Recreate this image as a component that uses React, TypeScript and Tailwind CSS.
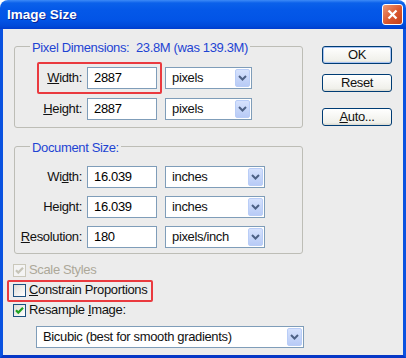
import React from "react";

function Chevron() {
  return (
    <svg width="9" height="6" viewBox="0 0 9 6">
      <path d="M1 1 L4.5 4.5 L8 1" fill="none" stroke="#4d6185" strokeWidth="2" />
    </svg>
  );
}

function Select({ label, w }: { label: string; w: string }) {
  return (
    <div className={`flex h-[22px] items-center border border-[#7f9db9] bg-white ${w}`}>
      <span className="flex-1 truncate whitespace-nowrap pl-[6px]">{label}</span>
      <div className="mr-[1px] flex h-[18px] w-[15px] items-center justify-center rounded-[2px] border border-[#b9cdf7] bg-[linear-gradient(to_bottom,#d6e2fd,#b8cbf6)]">
        <Chevron />
      </div>
    </div>
  );
}

function Input({ value }: { value: string }) {
  return (
    <div className="flex h-[22px] w-[70px] items-center border border-[#7f9db9] bg-white pl-[6px] text-black">
      {value}
    </div>
  );
}

function Check({ state }: { state: "disabled" | "off" | "on" }) {
  const box =
    state === "disabled"
      ? "border-[#cac8bb] bg-[#f4f4f4]"
      : "border-[#1c5180] bg-[linear-gradient(135deg,#dcdcd7,#ffffff)]";
  return (
    <div className={`flex h-[13px] w-[13px] shrink-0 items-center justify-center border ${box}`}>
      {state !== "off" && (
        <svg width="11" height="11" viewBox="0 0 11 11">
          <path
            d="M2 5.2 L4.3 7.6 L9 2.8"
            fill="none"
            stroke={state === "on" ? "#21a121" : "#c6c4b8"}
            strokeWidth="2.2"
          />
        </svg>
      )}
    </div>
  );
}

function Btn({ children, def, className }: { children: React.ReactNode; def?: boolean; className?: string }) {
  return (
    <div
      className={`flex h-[18px] w-[70px] items-center justify-center rounded-[3px] border border-[#003c74] bg-[linear-gradient(to_bottom,#ffffff,#f0f0ea_85%,#d8d8d0)] ${
        def ? "shadow-[inset_0_0_0_1px_#a9c4f3]" : ""
      } ${className ?? ""}`}
    >
      {children}
    </div>
  );
}

export default function App() {
  return (
    <div className="flex h-[358px] w-[406px] flex-col overflow-hidden rounded-t-[8px] font-['Liberation_Sans',Arial,sans-serif] text-[13px] leading-[16px] tracking-[-0.35px] text-[#111]">
      {/* title bar */}
      <div className="flex h-[29px] shrink-0 items-center justify-between bg-[linear-gradient(to_bottom,#3d8af7_0px,#0b61ea_3px,#0458e8_10px,#0254e6_20px,#004ad9_26px,#003cce_29px)] pl-[7px] pr-[3px]">
        <span className="pt-[1px] text-[13.5px] font-bold tracking-normal text-white [text-shadow:1px_1px_0_#0a2596]">Image Size</span>
        <div className="flex h-[21px] w-[21px] items-center justify-center rounded-[3px] border border-white bg-[linear-gradient(135deg,#ec9a78,#d9562e_55%,#c4401b)]">
          <svg width="11" height="11" viewBox="0 0 11 11">
            <path d="M1.5 1.5 L9.5 9.5 M9.5 1.5 L1.5 9.5" stroke="white" strokeWidth="2.3" />
          </svg>
        </div>
      </div>

      {/* frame + client */}
      <div className="flex flex-1 border-x-[3px] border-b-[3px] border-x-[#0a52e0] border-b-[#0637c6]">
        <div className="flex flex-1 bg-[#ececec] pl-[11px] pt-[17px]">
          {/* left column */}
          <div className="flex w-[290px] flex-col">
            {/* Pixel Dimensions */}
            <div className="relative w-[289px] rounded-[3px] border border-[#bdbdb6] pb-[7px] pt-[15px]">
              <span className="absolute -top-[7px] left-[15px] whitespace-pre bg-[#ececec] px-[2px] text-[#1e44d3]">
                Pixel Dimensions:  23.8M (was 139.3M)
              </span>
              <div className="flex items-center">
                <div className="ml-[22px] flex items-center rounded-[2px] border-2 border-[#ea3a3f] py-[3px] pr-[3px]">
                  <div className="flex w-[43px] justify-end whitespace-nowrap">
                    <span>
                      <u>W</u>idth:
                    </span>
                  </div>
                  <div className="ml-[5px]">
                    <Input value="2887" />
                  </div>
                </div>
                <div className="ml-[3px]">
                  <Select label="pixels" w="w-[87px]" />
                </div>
              </div>
              <div className="mt-[4px] flex items-center">
                <div className="ml-[22px] flex items-center border-x-2 border-transparent pr-[3px]">
                  <div className="flex w-[43px] justify-end whitespace-nowrap">
                    <span>
                      <u>H</u>eight:
                    </span>
                  </div>
                  <div className="ml-[5px]">
                    <Input value="2887" />
                  </div>
                </div>
                <div className="ml-[3px]">
                  <Select label="pixels" w="w-[87px]" />
                </div>
              </div>
            </div>

            {/* Document Size */}
            <div className="relative mt-[18px] w-[289px] rounded-[3px] border border-[#bdbdb6] pb-[5px] pt-[19px]">
              <span className="absolute -top-[7px] left-[15px] whitespace-pre bg-[#ececec] px-[2px] text-[#1e44d3]">
                Document Size:
              </span>
              <div className="flex flex-col gap-[8px]">
                {[
                  { l: <>Wi<u>d</u>th:</>, v: "16.039", s: "inches" },
                  { l: <>Hei<u>g</u>ht:</>, v: "16.039", s: "inches" },
                  { l: <><u>R</u>esolution:</>, v: "180", s: "pixels/inch" },
                ].map((r, i) => (
                  <div key={i} className="flex items-center">
                    <div className="ml-[24px] flex w-[43px] justify-end whitespace-nowrap">
                      <span>{r.l}</span>
                    </div>
                    <div className="ml-[5px]">
                      <Input value={r.v} />
                    </div>
                    <div className="ml-[8px]">
                      <Select label={r.s} w="w-[100px]" />
                    </div>
                  </div>
                ))}
              </div>
            </div>

            {/* checkboxes */}
            <div className="mt-[8px] flex flex-col">
              <div className="-ml-[7px] flex h-[20px] items-start border-x-2 border-transparent pl-[4px] pt-[2px]">
                <Check state="disabled" />
                <span className="-mt-[2px] ml-[3px] whitespace-nowrap text-[#aca899]">Scale Styles</span>
              </div>
              <div className="-ml-[7px] -mt-[2px] flex h-[22px] w-[146px] items-start rounded-[2px] border-2 border-[#ea3a3f] pl-[4px] pt-[2px]">
                <Check state="off" />
                <span className="-mt-[2px] ml-[3px] whitespace-nowrap">
                  <u>C</u>onstrain Proportions
                </span>
              </div>
              <div className="-ml-[7px] flex h-[20px] items-start border-x-2 border-transparent pl-[4px] pt-[2px]">
                <Check state="on" />
                <span className="-mt-[2px] ml-[3px] whitespace-nowrap">
                  Resample <u>I</u>mage:
                </span>
              </div>
              <div className="ml-[22px] mt-[4px]">
                <Select label="Bicubic (best for smooth gradients)" w="w-[268px]" />
              </div>
            </div>
          </div>

          {/* right column */}
          <div className="ml-[18px] flex flex-col">
            <Btn def>OK</Btn>
            <Btn className="mt-[10px]">Reset</Btn>
            <Btn className="mt-[16px]">
              <span>
                <u>A</u>uto...
              </span>
            </Btn>
          </div>
        </div>
      </div>
    </div>
  );
}
